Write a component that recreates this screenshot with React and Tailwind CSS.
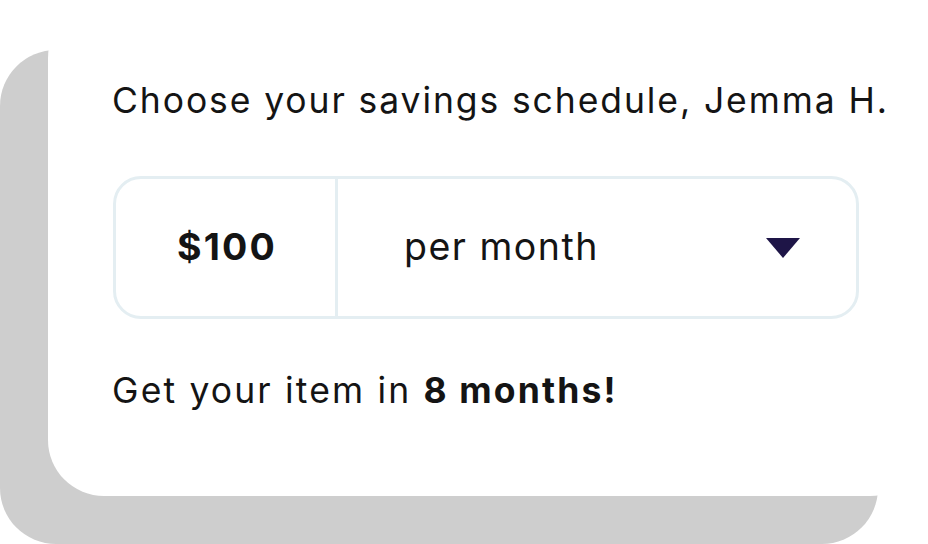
const App = () => {
  return (
    <div className="w-[928px] h-[544px] overflow-hidden bg-white" style={{ fontFamily: "Inter, 'Liberation Sans', sans-serif" }}>
      <div className="ml-[48px] mt-[2px] w-[878px] h-[494px] bg-white rounded-[56px] shadow-[-48px_48px_0_0_#cecece] pl-[65px] pt-[79px]">
        <h2 className="text-[35.5px] leading-[40px] text-[#141414] tracking-[1.9px] -ml-[1px]">Choose your savings schedule, Jemma H.</h2>
        <div className="mt-[55px] w-[746px] h-[143px] flex border-[3px] border-[#e4eef2] rounded-[28px]">
          <div className="w-[222px] flex items-center justify-center border-r-[3px] border-[#e4eef2]">
            <span className="text-[37.5px] font-bold text-[#141414] tracking-[2.2px] pl-[3px]">$100</span>
          </div>
          <div className="flex-1 flex items-center justify-between pl-[66px] pr-[56px]">
            <span className="text-[37.5px] text-[#141414] tracking-[1.5px]">per month</span>
            <svg width="34" height="20" viewBox="0 0 34 20">
              <path d="M0 0 H34 L17 20 Z" fill="#1e1547" />
            </svg>
          </div>
        </div>
        <p className="mt-[52px] text-[35.5px] leading-[40px] text-[#141414] tracking-[2.15px] -ml-[1px]">
          Get your item in <span className="font-bold">8 months!</span>
        </p>
      </div>
    </div>
  );
};

export default App;
